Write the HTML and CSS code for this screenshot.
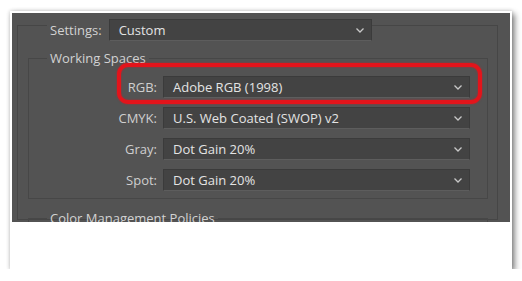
FILE: index.html
```html
<!DOCTYPE html>
<html lang="en">
<head>
    <meta charset="UTF-8">
    <title>Color Settings</title>
    <link rel="stylesheet" href="styles.css">
</head>
<body>
    <div class="card">
        <div class="panel">
            <div class="outer">
                <div class="settings-row">
                    <span class="settings-label">Settings:</span>
                    <div class="dropdown settings-drop">
                        <span>Custom</span>
                        <svg class="chev" width="8" height="5" viewBox="0 0 8 5"><polyline points="0.5,0.5 4,4 7.5,0.5"/></svg>
                    </div>
                </div>

                <fieldset class="group ws">
                    <legend>Working Spaces</legend>
                    <div class="row">
                        <label>RGB:</label>
                        <div class="dropdown">
                            <span>Adobe RGB (1998)</span>
                            <svg class="chev" width="8" height="5" viewBox="0 0 8 5"><polyline points="0.5,0.5 4,4 7.5,0.5"/></svg>
                        </div>
                        <div class="highlight"></div>
                    </div>
                    <div class="row">
                        <label>CMYK:</label>
                        <div class="dropdown">
                            <span>U.S. Web Coated (SWOP) v2</span>
                            <svg class="chev" width="8" height="5" viewBox="0 0 8 5"><polyline points="0.5,0.5 4,4 7.5,0.5"/></svg>
                        </div>
                    </div>
                    <div class="row">
                        <label>Gray:</label>
                        <div class="dropdown">
                            <span>Dot Gain 20%</span>
                            <svg class="chev" width="8" height="5" viewBox="0 0 8 5"><polyline points="0.5,0.5 4,4 7.5,0.5"/></svg>
                        </div>
                    </div>
                    <div class="row">
                        <label>Spot:</label>
                        <div class="dropdown">
                            <span>Dot Gain 20%</span>
                            <svg class="chev" width="8" height="5" viewBox="0 0 8 5"><polyline points="0.5,0.5 4,4 7.5,0.5"/></svg>
                        </div>
                    </div>
                </fieldset>

                <fieldset class="group cmp">
                    <legend>Color Management Policies</legend>
                </fieldset>
            </div>
        </div>
    </div>
</body>
</html>
```

FILE: styles.css
```css
body {
    margin: 0;
    background-color: #fff;
    font-family: "Open Sans", "Noto Sans", sans-serif;
    font-size: 13px;
}
.card {
    margin: 11px 0 0 10px;
    width: 502px;
    height: 258px;
    padding: 2px;
    box-sizing: border-box;
    background-color: #fff;
    box-shadow: 3px 3px 6px rgba(0, 0, 0, 0.45), 0 0 4px rgba(0, 0, 0, 0.2);
}
.panel {
    height: 209px;
    background-color: #535353;
    overflow: hidden;
    padding: 12px 12px 0 5px;
    box-sizing: border-box;
}
.outer {
    border: 1px solid #464646;
    height: 193px;
}
.settings-row {
    display: flex;
    align-items: center;
    margin: -7px 0 0 29px;
}
.settings-label {
    background-color: #535353;
    color: #d2d2d2;
    padding: 0 7px 0 3px;
    line-height: 22px;
}
.dropdown {
    position: relative;
    display: flex;
    align-items: center;
    justify-content: space-between;
    height: 22px;
    box-sizing: border-box;
    padding: 0 7px 0 9px;
    background-color: #434343;
    border: 1px solid #3b3b3b;
    border-bottom-color: #5d5d5d;
    color: #e4e4e4;
}
.settings-drop {
    width: 263px;
}
.chev {
    fill: none;
    stroke: #c8c8c8;
    stroke-width: 1.3;
}
.group {
    margin: 0 0 0 10px;
    padding: 0;
    width: 460px;
    border: 1px solid #474747;
    box-sizing: border-box;
}
.group legend {
    margin-left: 18px;
    padding: 0 3px;
    color: #d2d2d2;
    line-height: 18px;
}
.ws {
    margin-top: 8px;
    padding-top: 9px;
    padding-bottom: 7px;
}
.row {
    position: relative;
    display: flex;
    align-items: center;
    margin-bottom: 9px;
}
.row:last-child {
    margin-bottom: 0;
}
.row label {
    width: 128px;
    text-align: right;
    color: #cfcfcf;
    margin-right: 6px;
}
.row .dropdown {
    width: 307px;
}
.highlight {
    position: absolute;
    left: 88px;
    top: -13px;
    width: 365px;
    height: 41px;
    box-sizing: border-box;
    border: 4px solid #e3141b;
    border-radius: 11px;
    box-shadow: 0 0 2px rgba(227, 20, 27, 0.7), inset 0 0 2px rgba(227, 20, 27, 0.7);
}
.cmp {
    margin-top: 10px;
    height: 40px;
}
```
